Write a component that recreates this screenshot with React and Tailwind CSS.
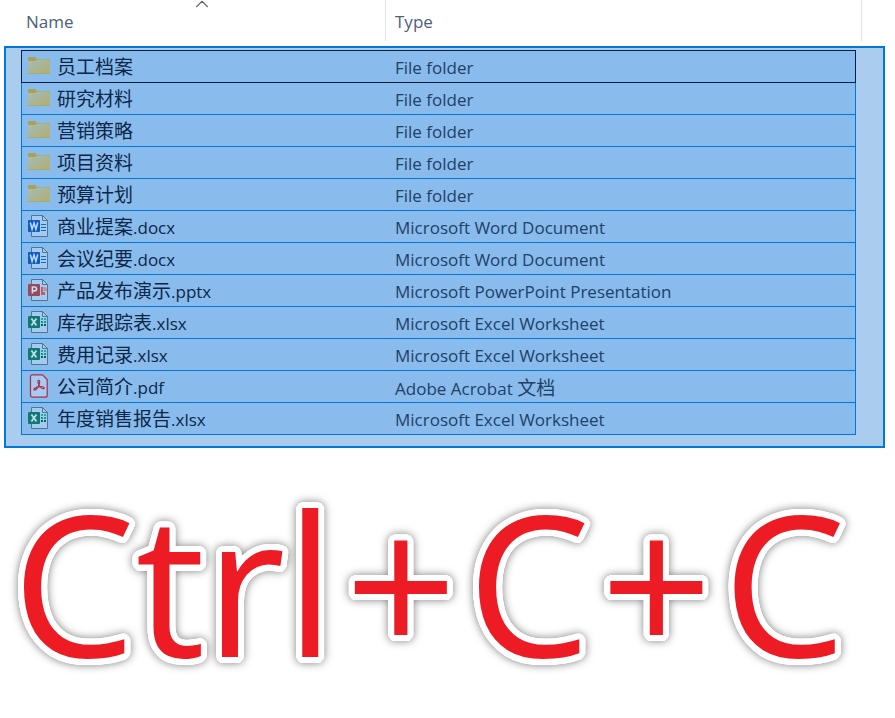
import { ChevronUp } from 'lucide-react';

const FILES = [
  { name: '员工档案', type: 'File folder', icon: 'folder' },
  { name: '研究材料', type: 'File folder', icon: 'folder' },
  { name: '营销策略', type: 'File folder', icon: 'folder' },
  { name: '项目资料', type: 'File folder', icon: 'folder' },
  { name: '预算计划', type: 'File folder', icon: 'folder' },
  { name: '商业提案.docx', type: 'Microsoft Word Document', icon: 'word' },
  { name: '会议纪要.docx', type: 'Microsoft Word Document', icon: 'word' },
  { name: '产品发布演示.pptx', type: 'Microsoft PowerPoint Presentation', icon: 'powerpoint' },
  { name: '库存跟踪表.xlsx', type: 'Microsoft Excel Worksheet', icon: 'excel' },
  { name: '费用记录.xlsx', type: 'Microsoft Excel Worksheet', icon: 'excel' },
  { name: '公司简介.pdf', type: 'Adobe Acrobat 文档', icon: 'pdf' },
  { name: '年度销售报告.xlsx', type: 'Microsoft Excel Worksheet', icon: 'excel' },
];

function FolderIcon() {
  return (
    <svg viewBox="0 0 22 24" className="h-6 w-[22px]" aria-hidden="true">
      <defs>
        <linearGradient id="folder" x1="0" y1="0" x2="1" y2="1">
          <stop offset="0" stopColor="#a3bdb6" />
          <stop offset="1" stopColor="#b0ae6e" />
        </linearGradient>
      </defs>
      <path d="M0 4 .8 3h6.4L8.5 5H22v3H0z" fill="#aba154" />
      <path d="M0 7h7.5L9 5.6h13V20H0z" fill="url(#folder)" />
      <path d="M0 19.5h22" stroke="#b3a66b" />
    </svg>
  );
}

// Blank page with a folded corner, shared by the Office icons
function Sheet({ children }) {
  return (
    <svg viewBox="0 0 22 24" className="h-6 w-[22px]" aria-hidden="true">
      <path d="M3.5 1.5h11l5 5v16h-16z" fill="#a5cbf0" stroke="#4d7597" />
      <path d="M14.5 1.5v5h5" fill="none" stroke="#4d7597" />
      {children}
    </svg>
  );
}

function WordIcon() {
  return (
    <Sheet>
      <path d="M13 10.5h5M13 13.5h5M13 16.5h5" stroke="#1268c4" />
      <rect y="6" width="12" height="12" rx="1" fill="#125bc5" />
      <path d="M2.3 8.5 4.1 15.2 6 9l1.9 6.2 1.8-6.7" fill="none" stroke="#c0dcf5" strokeWidth="1.5" />
    </Sheet>
  );
}

function PowerPointIcon() {
  return (
    <Sheet>
      <path d="M13 9v8h4v-3h-2V9z" fill="#b8606e" />
      <path d="M15.5 8.5V13H19a4 4 0 0 0-3.5-4.5z" fill="#c98a94" />
      <rect y="6" width="12" height="12" rx="1" fill="#954b5b" />
      <path d="M4.4 15.5V9h2.2a1.9 1.9 0 0 1 0 3.9H4.4" fill="none" stroke="#c9dcf1" strokeWidth="1.6" />
    </Sheet>
  );
}

function ExcelIcon() {
  return (
    <Sheet>
      <path d="M13 8h2v2h-2zM16 8h2v2h-2z" fill="#27a596" />
      <path d="M13 11h2v2h-2zM16 11h2v2h-2z" fill="#1c9189" />
      <path d="M13 14h2v2h-2zM16 14h2v2h-2z" fill="#0a645e" />
      <rect y="6" width="12" height="12" rx="1" fill="#0b7b73" />
      <path d="m3.4 8.5 5.1 7M8.5 8.5l-5.1 7" stroke="#bfdded" strokeWidth="1.8" />
    </Sheet>
  );
}

function PdfIcon() {
  return (
    <svg viewBox="0 0 22 24" className="h-6 w-[22px]" fill="none" stroke="#b12c49" aria-hidden="true">
      <path d="M4.5.8h10l4.7 4.7v15.7a2 2 0 0 1-2 2H4.5a2 2 0 0 1-2-2V2.8a2 2 0 0 1 2-2z" fill="#a5cbf0" strokeWidth="1.2" />
      <path d="M10.6 6.3c1.8 0 1.1 3.4-.4 6.2-1.4 2.8-3.3 4.1-4.2 3.4-1.1-.9 1.7-2.4 4.6-3 2.9-.6 5.9-.2 5.7 1.1-.2 1.5-3.3.5-4.9-2-1.2-1.9-2.1-5.7-.8-5.7z" strokeWidth="1.2" />
    </svg>
  );
}

const ICONS = {
  folder: FolderIcon,
  word: WordIcon,
  powerpoint: PowerPointIcon,
  excel: ExcelIcon,
  pdf: PdfIcon,
};

/** Sets Chinese runs slightly larger than the Latin text around them. */
function MixedText({ text }) {
  return text.split(/([\u4e00-\u9fff]+)/).filter(Boolean).map((part, i) => (
    /[\u4e00-\u9fff]/.test(part)
      ? <span key={i} lang="zh-CN" className="text-[19px]">{part}</span>
      : <span key={i}>{part}</span>
  ));
}

function FileRow({ file, focused }) {
  const Icon = ICONS[file.icon];
  return (
    <tr
      className={`flex border-x border-b bg-[#89bbec] ${
        focused ? 'border-t border-[#001f45]' : 'border-[#0078d7]'
      }`}
    >
      <td className="flex h-[31px] w-[363px] shrink-0 items-start gap-[7px] pl-1.5 text-[#0c2748]">
        <span className="pt-[3px]"><Icon /></span>
        <span className="whitespace-nowrap leading-8"><MixedText text={file.name} /></span>
      </td>
      <td className="h-[31px] min-w-0 flex-1 whitespace-nowrap pl-2.5 leading-[34px] text-[#1d4168]">
        <MixedText text={file.type} />
      </td>
    </tr>
  );
}

// White rounded rim around the big lettering: one copy of the glyphs per step of the circle
const RIM = Array.from({ length: 32 }, (_, i) => {
  const angle = (i / 32) * 2 * Math.PI;
  return `${(6 * Math.cos(angle)).toFixed(1)}px ${(6 * Math.sin(angle)).toFixed(1)}px 0 #fff`;
}).join(', ');

function Shortcut({ keys }) {
  return (
    <p
      className="whitespace-nowrap pl-3 text-[196px] leading-[266px] text-[#ed1c24] drop-shadow-[0_0_4px_rgba(0,0,0,0.5)]"
      style={{ textShadow: RIM }}
    >
      {keys.map((key, i) => (
        <span key={i}>
          {i > 0 && <span className="mx-2.5">+</span>}
          {key}
        </span>
      ))}
    </p>
  );
}

export default function App() {
  return (
    <main className="bg-white font-['Open_Sans','Noto_Sans_CJK_SC',sans-serif]">
      <table className="block w-full text-[17px]">
        <thead className="block">
          <tr className="mr-[33px] flex h-[41px] text-left text-[#4c607a]">
            <th
              aria-sort="ascending"
              className="relative w-[386px] shrink-0 border-r border-[#e2e2e2] pl-[26px] pt-[9px] font-normal"
            >
              <button type="button">Name</button>
              <ChevronUp className="absolute -top-[7px] left-[191px] size-[22px] text-[#666]" strokeWidth={1.2} />
            </th>
            <th className="flex-1 border-r border-[#e2e2e2] pl-[9px] pt-[9px] font-normal">
              <button type="button">Type</button>
            </th>
          </tr>
        </thead>
        <tbody className="ml-1 mr-2.5 mt-[5px] block border-2 border-[#0078d7] bg-[#aaccee] pb-[11px] pl-[15px] pr-[27px] pt-0.5">
          {FILES.map((file, i) => (
            <FileRow key={file.name} file={file} focused={i === 0} />
          ))}
        </tbody>
      </table>

      <Shortcut keys={['Ctrl', 'C', 'C']} />
    </main>
  );
}
